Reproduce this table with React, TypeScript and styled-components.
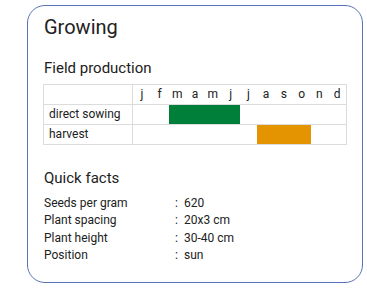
import { Fragment } from "react";
import styled, { createGlobalStyle } from "styled-components";

const GlobalStyle = createGlobalStyle`
  body {
    margin: 0;
    background: #ffffff;
    font-family: Roboto, "Liberation Sans", sans-serif;
    color: #212121;
  }
`;

const Page = styled.div`
  padding: 5px 0 0 27px;
`;

const Card = styled.section`
  box-sizing: border-box;
  width: 336px;
  height: 278px;
  padding: 9px 15px 0 15px;
  border: 1px solid #5a72b8;
  border-radius: 18px;
`;

const Title = styled.h1`
  margin: 0;
  font-size: 20px;
  line-height: 24px;
  font-weight: 400;
  padding-left: 1px;
`;

const SectionTitle = styled.h2<{ $gap: number }>`
  margin: ${({ $gap }) => $gap}px 0 0 0;
  font-size: 15px;
  line-height: 18px;
  font-weight: 400;
  padding-left: 1px;
`;

const Calendar = styled.div`
  margin-top: 7px;
  width: 304px;
  box-sizing: border-box;
  border: 1px solid #dcdcdc;
  font-size: 12px;
`;

const CalendarRow = styled.div`
  display: grid;
  grid-template-columns: 89px repeat(12, 1fr);
  height: 19px;
  & + & {
    border-top: 1px solid #dcdcdc;
  }
`;

const RowLabel = styled.div`
  border-right: 1px solid #dcdcdc;
  padding-left: 5px;
  line-height: 19px;
`;

const Month = styled.div`
  text-align: center;
  line-height: 19px;
`;

const Slot = styled.div<{ $color?: string }>`
  background: ${({ $color }) => $color || "transparent"};
`;

const Facts = styled.dl`
  margin: 8px 0 0 0;
  display: grid;
  grid-template-columns: 131px 9px 1fr;
  font-size: 12px;
  line-height: 17.3px;
  padding-left: 1px;
`;

const FactLabel = styled.dt`
  margin: 0;
`;

const Colon = styled.span``;

const FactValue = styled.dd`
  margin: 0;
`;

const months = ["j", "f", "m", "a", "m", "j", "j", "a", "s", "o", "n", "d"];

const schedule = [
  { label: "direct sowing", from: 2, to: 5, color: "#007f3a" },
  { label: "harvest", from: 7, to: 9, color: "#e39400" },
];

const facts = [
  ["Seeds per gram", "620"],
  ["Plant spacing", "20x3 cm"],
  ["Plant height", "30-40 cm"],
  ["Position", "sun"],
];

export default function App() {
  return (
    <Page>
      <GlobalStyle />
      <Card>
        <Title>Growing</Title>
        <SectionTitle $gap={20}>Field production</SectionTitle>
        <Calendar>
          <CalendarRow>
            <RowLabel />
            {months.map((m, i) => (
              <Month key={`month-${i}`}>{m}</Month>
            ))}
          </CalendarRow>
          {schedule.map((row) => (
            <CalendarRow key={row.label}>
              <RowLabel>{row.label}</RowLabel>
              {months.map((_, i) => (
                <Slot
                  key={`${row.label}-${i}`}
                  $color={i >= row.from && i <= row.to ? row.color : undefined}
                />
              ))}
            </CalendarRow>
          ))}
        </Calendar>
        <SectionTitle $gap={24}>Quick facts</SectionTitle>
        <Facts>
          {facts.map(([label, value]) => (
            <Fragment key={label}>
              <FactLabel>{label}</FactLabel>
              <Colon>:</Colon>
              <FactValue>{value}</FactValue>
            </Fragment>
          ))}
        </Facts>
      </Card>
    </Page>
  );
}
